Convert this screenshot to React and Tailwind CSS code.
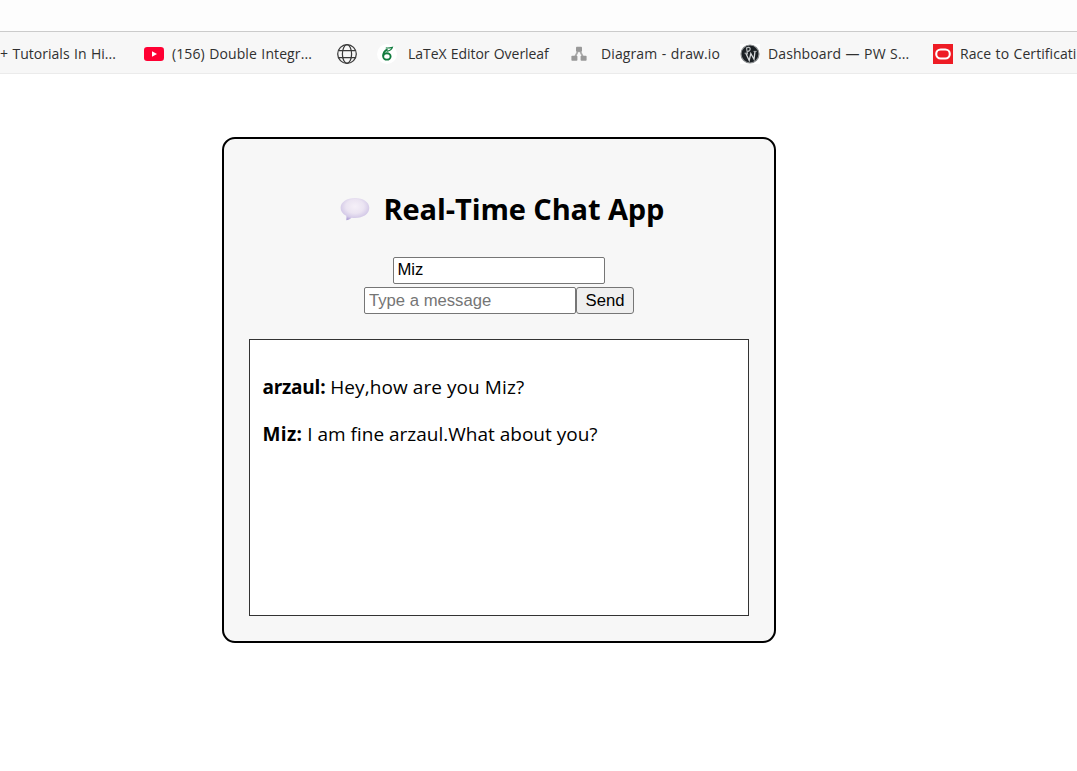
import React from "react";

const barText = "block shrink-0 whitespace-nowrap pb-[2px] [word-spacing:0.7px]";

function YouTubeIcon() {
  return (
    <svg className="h-5 w-5 shrink-0" viewBox="0 0 20 20">
      <rect x="0" y="3" width="20" height="14" rx="3.2" fill="#ff0033" />
      <path d="M8 7.2 13 10 8 12.8Z" fill="#fff" />
    </svg>
  );
}

function GlobeIcon() {
  return (
    <svg className="h-5 w-5 shrink-0" viewBox="0 0 20 20" fill="none" stroke="#3b3b3b" strokeWidth="1.25">
      <circle cx="10" cy="10" r="9.3" />
      <ellipse cx="10" cy="10" rx="4.6" ry="9.3" />
      <path d="M1.500 6.500h17M1.500 13.500h17" />
    </svg>
  );
}

function OverleafIcon() {
  return (
    <svg className="h-5 w-5 shrink-0" viewBox="0 0 20 20">
      <circle cx="10" cy="10" r="10" fill="#fff" />
      <ellipse cx="9.900" cy="12.400" rx="3.700" ry="3.200" fill="none" stroke="#0f7a3c" strokeWidth="1.900" />
      <path d="M6.200 12.200C6 9.200 7.400 6.800 10.600 5.400" fill="none" stroke="#0f7a3c" strokeWidth="1.700" />
      <path d="M8.800 3.800C11 4.300 13.200 3.900 15.400 3.300C14.700 5.800 12.800 6.600 9.600 7.300" fill="none" stroke="#0f7a3c" strokeWidth="1.200" />
    </svg>
  );
}

function DiagramIcon() {
  return (
    <svg className="h-4 w-4 shrink-0" viewBox="0 0 16 16">
      <path d="M8 3 3.500 12M8 3l4.500 9" stroke="#aaa" strokeWidth="1.700" />
      <g fill="#999">
        <rect x="5" y="0.700" width="6" height="5" rx="0.800" />
        <rect x="0.400" y="9.800" width="6" height="5" rx="0.800" />
        <rect x="9.600" y="9.800" width="6" height="5" rx="0.800" />
      </g>
    </svg>
  );
}

function DashboardIcon() {
  return (
    <svg className="h-5 w-5 shrink-0" viewBox="0 0 20 20">
      <rect width="20" height="20" fill="#fff" />
      <circle cx="10" cy="10" r="9" fill="#1b2024" stroke="#8c8f91" strokeWidth="1.200" />
      <path d="M7.600 10.500 6.400 3.500M6.400 4C10.500 1.700 12 6.500 7.300 7.600" fill="none" stroke="#b5b9bb" strokeWidth="1.200" />
      <path d="M5.800 9.200 9.200 16.500 10.800 9.500 14 15.200 15 7.400" fill="none" stroke="#d5d8da" strokeWidth="1.300" />
      <path d="M13.600 7.400h3M4.600 9.200h2.600" stroke="#b5b9bb" strokeWidth="1" />
    </svg>
  );
}

function OracleIcon() {
  return (
    <svg className="h-5 w-5 shrink-0" viewBox="0 0 20 20">
      <rect width="20" height="20" fill="#ee1c25" />
      <rect x="3.200" y="5.500" width="13.600" height="9" rx="4.500" fill="none" stroke="#fff" strokeWidth="2.100" />
    </svg>
  );
}

function SpeechBubble() {
  return (
    <svg className="h-6 w-[30px] shrink-0" viewBox="0 0 30 24">
      <defs>
        <radialGradient id="bubble" cx="0.5" cy="0.38" r="0.62">
          <stop offset="0" stopColor="#f5f0f8" />
          <stop offset="0.5" stopColor="#ebe4f2" />
          <stop offset="0.82" stopColor="#d5cbe8" />
          <stop offset="1" stopColor="#b3a5d8" />
        </radialGradient>
      </defs>
      <path d="M15 1C23 1 29.300 5.100 29.300 10.800C29.300 17 23 21 15 21C13.700 21 12.700 20.900 11.500 20.700C10 22 8.200 22.900 6.200 23.200C6.500 21.700 6.600 20 6.200 18.700C2.600 17 0.600 14.200 0.600 10.800C0.600 5.100 7 1 15 1Z" fill="url(#bubble)" />
    </svg>
  );
}

export default function App() {
  return (
    <div className="h-[771px] w-[1077px] overflow-hidden bg-white font-['Open_Sans','Noto_Sans',sans-serif] text-black">
      <div className="h-[31px] bg-[#fdfdfd]" />
      <nav className="flex h-[43px] items-center overflow-hidden border-t border-b border-t-[#cbcbcb] border-b-[#ebebeb] bg-[#f7f7f7] pt-[3px] text-[14px] text-[#303030]">
        <span className={`${barText} w-[144px] tracking-[0.03px]`}>+ Tutorials In Hi...</span>
        <YouTubeIcon />
        <span className={`${barText} ml-2 w-[165px] tracking-[0.1px]`}>(156) Double Integr...</span>
        <GlobeIcon />
        <span className="ml-5 flex"><OverleafIcon /></span>
        <span className={`${barText} ml-[11px] w-[163px] tracking-[-0.05px]`}>LaTeX Editor Overleaf</span>
        <DiagramIcon />
        <span className={`${barText} ml-[14px] w-[139px] tracking-[0.1px]`}>Diagram - draw.io</span>
        <DashboardIcon />
        <span className={`${barText} ml-2 w-[165px] tracking-[0.1px]`}>Dashboard — PW S...</span>
        <OracleIcon />
        <span className={`${barText} ml-[7px] tracking-[0.06px]`}>Race to Certificati</span>
      </nav>
      <main className="ml-[222px] mt-[63px] flex h-[506px] w-[554px] flex-col items-center rounded-[13px] border-2 border-black bg-[#f7f7f7]">
        <h2 className="mt-[49px] flex h-[42px] w-full items-center pl-[116px] text-[29px] font-bold leading-[42px]">
          <SpeechBubble />
          <span className="ml-[13.5px] whitespace-nowrap tracking-[-0.1px]">Real-Time Chat App</span>
        </h2>
        <div className="mt-[27px] flex flex-col items-center gap-[3px] font-['Liberation_Sans',sans-serif] text-[16.67px] leading-[20px]">
          <input
            className="block h-[27px] w-[212px] rounded-[2px] border border-[#767676] bg-white px-[3.4px] pb-[2px] outline-none"
            defaultValue="Miz"
          />
          <form className="flex" onSubmit={(e) => e.preventDefault()}>
            <input
              className="block h-[27px] w-[212px] rounded-[2px] border border-[#767676] bg-white px-[4px] outline-none placeholder:text-[#757575]"
              placeholder="Type a message"
            />
            <button className="h-[27px] w-[58px] rounded-[3px] border border-[#767676] bg-[#efefef]">Send</button>
          </form>
        </div>
        <section className="mt-[25px] h-[277px] w-[500px] border border-[#333] bg-white px-[12.5px] pt-[34px] text-[19px] leading-[27px]">
          <p className="whitespace-nowrap">
            <strong className="tracking-[-0.25px]">arzaul:</strong> <span className="tracking-[0.08px]">Hey,how are you Miz?</span>
          </p>
          <p className="mt-5 whitespace-nowrap">
            <strong className="tracking-[0.35px]">Miz:</strong> <span>I am fine arzaul.What about you?</span>
          </p>
        </section>
      </main>
    </div>
  );
}
